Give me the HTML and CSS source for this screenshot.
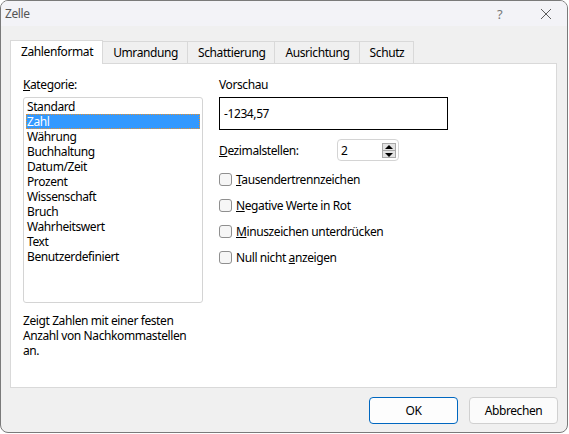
FILE: index.html
```html
<!DOCTYPE html>
<html>
	<head>
		<title>Zelle</title>
		<link rel="stylesheet" href="styles.css">
	</head>
	<body>
		<div class="window">
			<div class="titlebar">
				<span class="title">Zelle</span>
				<span class="help">?</span>
				<span class="close">
					<svg width="12" height="12" viewBox="0 0 12 12"><path d="M1 1 L11 11 M11 1 L1 11" stroke="#5c5c5c" stroke-width="1" fill="none"/></svg>
				</span>
			</div>
			<div class="tabs">
				<div class="tab selected">Zahlenformat</div>
				<div class="tab">Umrandung</div>
				<div class="tab">Schattierung</div>
				<div class="tab">Ausrichtung</div>
				<div class="tab">Schutz</div>
			</div>
			<div class="panel">
				<div class="col-left">
					<div class="label"><u>K</u>ategorie:</div>
					<div class="listbox">
						<div class="item">Standard</div>
						<div class="item selected">Zahl</div>
						<div class="item">Währung</div>
						<div class="item">Buchhaltung</div>
						<div class="item">Datum/Zeit</div>
						<div class="item">Prozent</div>
						<div class="item">Wissenschaft</div>
						<div class="item">Bruch</div>
						<div class="item">Wahrheitswert</div>
						<div class="item">Text</div>
						<div class="item">Benutzerdefiniert</div>
					</div>
					<div class="description">Zeigt Zahlen mit einer festen Anzahl von Nachkommastellen an.</div>
				</div>
				<div class="col-right">
					<div class="label">Vorschau</div>
					<div class="preview">-1234,57</div>
					<div class="decimals">
						<span class="decimals-label"><u>D</u>ezimalstellen:</span>
						<div class="spinner">
							<span class="spin-value">2</span>
							<span class="spin-buttons">
								<span class="spin-up"></span>
								<span class="spin-down"></span>
							</span>
						</div>
					</div>
					<div class="check"><span class="box"></span><span><u>T</u>ausendertrennzeichen</span></div>
					<div class="check"><span class="box"></span><span><u>N</u>egative Werte in Rot</span></div>
					<div class="check"><span class="box"></span><span><u>M</u>inuszeichen unterdrücken</span></div>
					<div class="check"><span class="box"></span><span>Null nicht <u>a</u>nzeigen</span></div>
				</div>
			</div>
			<div class="buttons">
				<div class="button default">OK</div>
				<div class="button">Abbrechen</div>
			</div>
		</div>
	</body>
</html>
```

FILE: styles.css
```css
body
{
	margin: 0;
	font-family: "Noto Sans", "Open Sans", sans-serif;
	font-size: 12px;
	letter-spacing: -0.4px;
	color: #000000;
	background: #ffffff;
}

.window
{
	box-sizing: border-box;
	width: 568px;
	height: 433px;
	border: 1px solid #7a7a7a;
	border-radius: 8px;
	background: #f0f0f0;
	overflow: hidden;
}

.titlebar
{
	height: 25px;
	background: #f3f3f7;
	display: flex;
	align-items: center;
	padding-left: 4px;
}
.title
{
	color: #555555;
	flex: 1;
}
.help
{
	color: #777777;
	width: 43px;
	font-size: 13px;
}
.close
{
	width: 27px;
	display: flex;
	align-items: center;
}

.tabs
{
	display: flex;
	align-items: flex-end;
	height: 23px;
	margin-top: 14px;
	margin-left: 9px;
	position: relative;
	z-index: 1;
}
.tab
{
	box-sizing: border-box;
	height: 22px;
	padding: 0 9px 0 10px;
	border: 1px solid #d9d9d9;
	border-bottom: none;
	margin-left: -1px;
	display: flex;
	align-items: center;
}
.tab.selected
{
	height: 24px;
	margin-left: 0;
	margin-bottom: -1px;
	background: #ffffff;
	padding-bottom: 2px;
}

.panel
{
	box-sizing: border-box;
	width: 547px;
	height: 325px;
	margin-left: 9px;
	border: 1px solid #d9d9d9;
	background: #ffffff;
	display: flex;
	padding: 13px 0 0 12px;
	gap: 16px;
}

.col-left
{
	width: 180px;
}
.label
{
	line-height: 15px;
	height: 15px;
}
.listbox
{
	box-sizing: border-box;
	margin-top: 5px;
	height: 206px;
	border: 1px solid #d4d4d4;
	border-radius: 3px;
	padding: 1px 2px;
}
.item
{
	height: 15px;
	line-height: 15px;
	padding-left: 1px;
}
.item.selected
{
	background: #3399ff;
	color: #ffffff;
	outline: 1px dotted #e8912e;
	outline-offset: -1px;
}
.description
{
	margin-top: 10px;
	line-height: 15px;
	width: 175px;
}

.col-right
{
	width: 230px;
}
.preview
{
	box-sizing: border-box;
	margin-top: 5px;
	height: 33px;
	width: 229px;
	border: 1px solid #000000;
	padding-left: 4px;
	display: flex;
	align-items: center;
}
.decimals
{
	display: flex;
	align-items: center;
	margin-top: 9px;
	height: 22px;
}
.decimals-label
{
	width: 118px;
}
.spinner
{
	box-sizing: border-box;
	width: 62px;
	height: 22px;
	border: 1px solid #d4d4d4;
	border-radius: 4px;
	display: flex;
	align-items: center;
	padding: 0 2px 0 3px;
}
.spin-value
{
	flex: 1;
}
.spin-buttons
{
	display: flex;
	flex-direction: column;
	width: 14px;
	height: 15px;
	border: 1px solid #a8a8a8;
	box-sizing: border-box;
}
.spin-up, .spin-down
{
	flex: 1;
	background: #e3e3e3;
	position: relative;
}
.spin-up
{
	border-bottom: 1px solid #a8a8a8;
}
.spin-up::after, .spin-down::after
{
	content: "";
	position: absolute;
	left: 2px;
	top: 1px;
	border-left: 4px solid transparent;
	border-right: 4px solid transparent;
}
.spin-up::after
{
	border-bottom: 4px solid #000000;
}
.spin-down::after
{
	top: 2px;
	border-top: 4px solid #000000;
}

.check
{
	display: flex;
	align-items: center;
	height: 26px;
}
.decimals + .check
{
	margin-top: 5px;
}
.box
{
	box-sizing: border-box;
	width: 13px;
	height: 13px;
	border: 1px solid #8f8f8f;
	border-radius: 3px;
	background: #f6f6f6;
	margin-right: 4px;
}

.buttons
{
	display: flex;
	justify-content: flex-end;
	gap: 11px;
	margin-top: 9px;
	padding-right: 9px;
}
.button
{
	box-sizing: border-box;
	width: 89px;
	height: 27px;
	border: 1px solid #d0d0d0;
	border-radius: 4px;
	background: #fbfbfb;
	display: flex;
	align-items: center;
	justify-content: center;
}
.button.default
{
	border-color: #0067c0;
	background: #fdfdfd;
}
```
